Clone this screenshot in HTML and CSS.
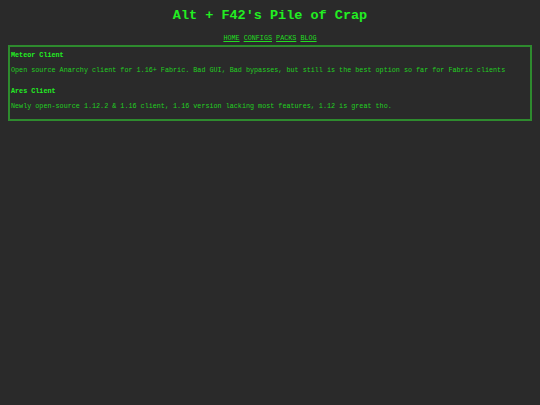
FILE: index.html
```html
<!DOCTYPE html>
<html>
<head>
<meta charset="utf-8">
<link rel="stylesheet" href="styles.css">
</head>
<body>
<h1 class="title">Alt + F42's Pile of Crap</h1>
<nav class="nav"><a href="#">HOME</a> <a href="#">CONFIGS</a> <a href="#">PACKS</a> <a href="#">BLOG</a></nav>
<div class="box">
  <h2 class="item-title">Meteor Client</h2>
  <p class="item-text">Open source Anarchy client for 1.16+ Fabric. Bad GUI, Bad bypasses, but still is the best option so far for Fabric clients</p>
  <h2 class="item-title item-gap">Ares Client</h2>
  <p class="item-text">Newly open-source 1.12.2 &amp; 1.16 client, 1.16 version lacking most features, 1.12 is great tho.</p>
</div>
</body>
</html>
```
FILE: styles.css
```css
html, body {
  background: #2a2a2a;
}
body {
  margin: 0;
  padding: 0 8px;
  font-family: "Liberation Mono", "DejaVu Sans Mono", monospace;
  color: #22dd22;
}
.title {
  margin: 0;
  padding-top: 7px;
  font-size: 13.5px;
  line-height: 18px;
  text-align: center;
  font-weight: bold;
  color: #22ee22;
}
.nav {
  margin-top: 9px;
  text-align: center;
  font-size: 6.75px;
  line-height: 8px;
}
.nav a {
  color: #22dd22;
  text-decoration: underline;
}
.box {
  margin-top: 3px;
  border: 2px solid #2e8b2e;
  padding: 4px 1px 9px;
}
.item-title {
  margin: 0;
  font-size: 6.75px;
  line-height: 8px;
  font-weight: bold;
  color: #22ee22;
}
.item-gap {
  margin-top: 13.5px;
}
.item-text {
  margin: 6.5px 0 0;
  font-size: 6.75px;
  line-height: 8px;
  color: #22d022;
}
```
